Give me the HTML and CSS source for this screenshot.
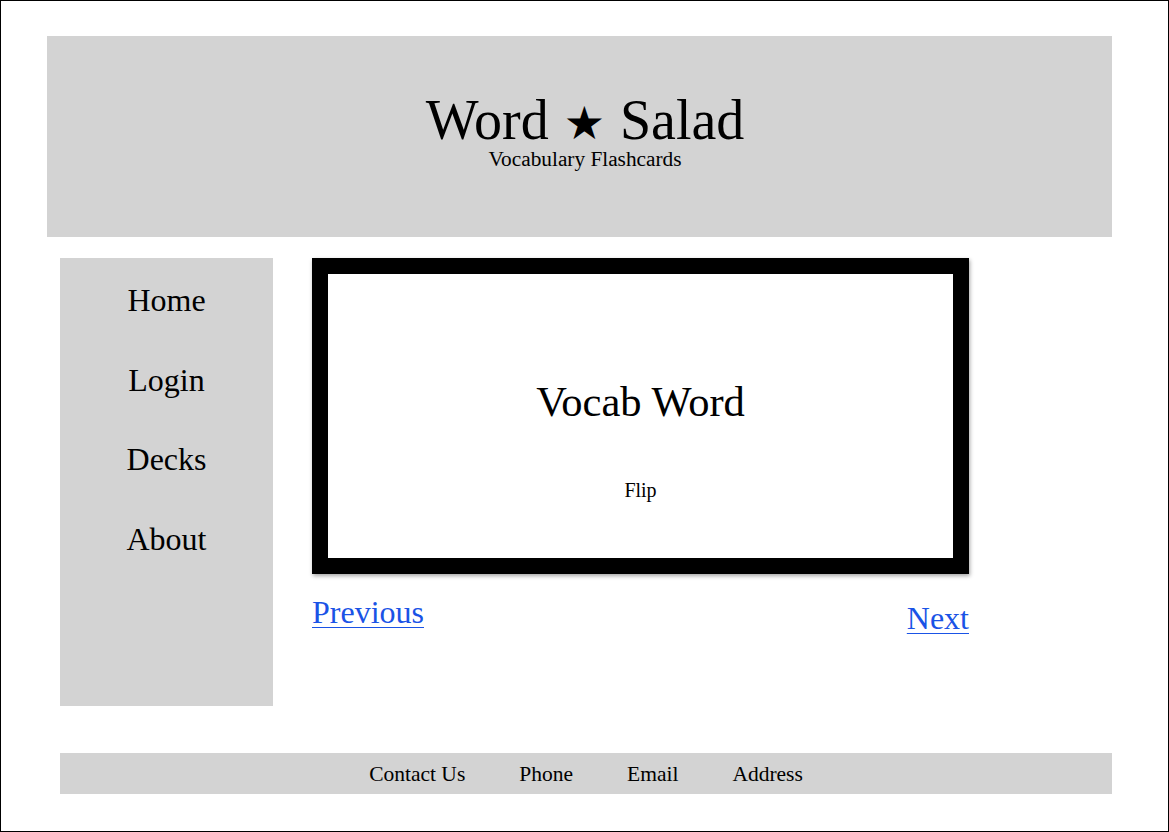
FILE: index.html
```html
<!DOCTYPE html>
<html lang="en">
<head>
<meta charset="utf-8">
<title>Word Salad</title>
<link rel="stylesheet" href="styles.css">
</head>
<body>
<header class="site-header">
  <h1 class="title">Word <span class="star">★</span> Salad</h1>
  <p class="subtitle">Vocabulary Flashcards</p>
</header>
<div class="main">
  <nav class="sidebar">
    <a class="nav-item" href="#">Home</a>
    <a class="nav-item" href="#">Login</a>
    <a class="nav-item" href="#">Decks</a>
    <a class="nav-item" href="#">About</a>
  </nav>
  <section class="content">
    <div class="card">
      <div class="word">Vocab Word</div>
      <div class="flip">Flip</div>
    </div>
    <div class="pager">
      <a class="link prev" href="#">Previous</a>
      <a class="link next" href="#">Next</a>
    </div>
  </section>
</div>
<footer class="site-footer">
  <span>Contact Us</span>
  <span>Phone</span>
  <span>Email</span>
  <span>Address</span>
</footer>
</body>
</html>
```
FILE: styles.css
```css
html, body {
  margin: 0;
  padding: 0;
}
body {
  box-sizing: border-box;
  height: 832px;
  border: 1px solid #000;
  font-family: "Liberation Serif", "DejaVu Serif", serif;
  color: #000;
  background: #fff;
  overflow: hidden;
}
.site-header {
  margin: 35px 56px 0 46px;
  height: 201px;
  box-sizing: border-box;
  background: #d3d3d3;
  padding: 56px 0 0 11px;
  display: flex;
  flex-direction: column;
  align-items: center;
}
.title {
  margin: 0;
  font-size: 56px;
  font-weight: normal;
  line-height: 1;
  white-space: nowrap;
}
.star {
  font-family: "DejaVu Sans", sans-serif;
  font-size: 46px;
  padding: 0 1px;
}
.subtitle {
  margin: 1px 0 0;
  font-size: 21.3px;
  line-height: 1;
}
.main {
  display: flex;
  gap: 39px;
  margin: 21px 0 0 59px;
}
.sidebar {
  width: 213px;
  height: 448px;
  box-sizing: border-box;
  background: #d3d3d3;
  padding-top: 26px;
  display: flex;
  flex-direction: column;
  align-items: center;
  gap: 47.5px;
}
.nav-item {
  font-size: 32px;
  line-height: 1;
  color: #000;
  text-decoration: none;
}
.content {
  width: 657px;
}
.card {
  box-sizing: border-box;
  height: 316px;
  border: 16px solid #000;
  box-shadow: 1px 2px 4px rgba(0, 0, 0, 0.35);
  padding-top: 104px;
  text-align: center;
}
.word {
  font-size: 42.5px;
  line-height: 48px;
}
.flip {
  margin-top: 53px;
  font-size: 20px;
  line-height: 23px;
}
.pager {
  display: flex;
  justify-content: space-between;
  align-items: flex-start;
  margin-top: 22px;
}
.link {
  font-size: 32px;
  line-height: 1;
  color: #1a53e6;
  text-decoration: underline;
  text-decoration-thickness: 1px;
  text-underline-offset: 4px;
}
.next {
  margin-top: 6px;
}
.site-footer {
  margin: 47px 56px 0 59px;
  height: 41px;
  box-sizing: border-box;
  padding-top: 3px;
  background: #d3d3d3;
  display: flex;
  justify-content: center;
  align-items: center;
  gap: 54px;
  font-size: 21.5px;
  line-height: 1;
}
```
